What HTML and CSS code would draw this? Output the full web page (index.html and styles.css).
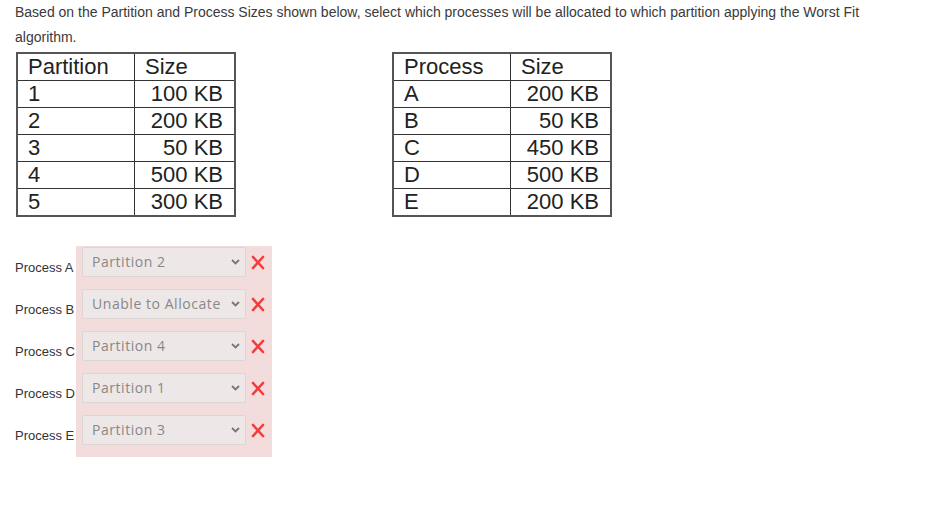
FILE: index.html
```html
<!DOCTYPE html>
<html lang="en">
  <head>
    <meta charset="UTF-8" />
    <meta name="viewport" content="width=device-width, initial-scale=1.0" />
    <title>Worst Fit Allocation</title>
    <link rel="stylesheet" href="styles.css">
  </head>
  <body>
    <p class="question">
      Based on the Partition and Process Sizes shown below, select which processes will be allocated to which partition applying the Worst Fit algorithm.
    </p>

    <div class="tables">
      <table class="size-table">
        <tr><th>Partition</th><th>Size</th></tr>
        <tr><td>1</td><td class="num">100 KB</td></tr>
        <tr><td>2</td><td class="num">200 KB</td></tr>
        <tr><td>3</td><td class="num">50 KB</td></tr>
        <tr><td>4</td><td class="num">500 KB</td></tr>
        <tr><td>5</td><td class="num">300 KB</td></tr>
      </table>

      <table class="size-table">
        <tr><th>Process</th><th>Size</th></tr>
        <tr><td>A</td><td class="num">200 KB</td></tr>
        <tr><td>B</td><td class="num">50 KB</td></tr>
        <tr><td>C</td><td class="num">450 KB</td></tr>
        <tr><td>D</td><td class="num">500 KB</td></tr>
        <tr><td>E</td><td class="num">200 KB</td></tr>
      </table>
    </div>

    <div class="answers">
      <div class="labels">
        <div class="label">Process A</div>
        <div class="label">Process B</div>
        <div class="label">Process C</div>
        <div class="label">Process D</div>
        <div class="label">Process E</div>
      </div>

      <div class="incorrect">
        <div class="answer-row">
          <div class="select"><span>Partition 2</span>
            <svg class="chevron" width="9" height="6" viewBox="0 0 9 6"><path d="M1 1l3.5 3.5L8 1" fill="none" stroke="#777" stroke-width="1.8"/></svg>
          </div>
          <svg class="mark" width="14" height="15" viewBox="0 0 14 15"><path d="M2 2l10 11M12 2L2 13" fill="none" stroke="#f53b3b" stroke-width="2.6" stroke-linecap="round"/></svg>
        </div>
        <div class="answer-row">
          <div class="select"><span>Unable to Allocate</span>
            <svg class="chevron" width="9" height="6" viewBox="0 0 9 6"><path d="M1 1l3.5 3.5L8 1" fill="none" stroke="#777" stroke-width="1.8"/></svg>
          </div>
          <svg class="mark" width="14" height="15" viewBox="0 0 14 15"><path d="M2 2l10 11M12 2L2 13" fill="none" stroke="#f53b3b" stroke-width="2.6" stroke-linecap="round"/></svg>
        </div>
        <div class="answer-row">
          <div class="select"><span>Partition 4</span>
            <svg class="chevron" width="9" height="6" viewBox="0 0 9 6"><path d="M1 1l3.5 3.5L8 1" fill="none" stroke="#777" stroke-width="1.8"/></svg>
          </div>
          <svg class="mark" width="14" height="15" viewBox="0 0 14 15"><path d="M2 2l10 11M12 2L2 13" fill="none" stroke="#f53b3b" stroke-width="2.6" stroke-linecap="round"/></svg>
        </div>
        <div class="answer-row">
          <div class="select"><span>Partition 1</span>
            <svg class="chevron" width="9" height="6" viewBox="0 0 9 6"><path d="M1 1l3.5 3.5L8 1" fill="none" stroke="#777" stroke-width="1.8"/></svg>
          </div>
          <svg class="mark" width="14" height="15" viewBox="0 0 14 15"><path d="M2 2l10 11M12 2L2 13" fill="none" stroke="#f53b3b" stroke-width="2.6" stroke-linecap="round"/></svg>
        </div>
        <div class="answer-row">
          <div class="select"><span>Partition 3</span>
            <svg class="chevron" width="9" height="6" viewBox="0 0 9 6"><path d="M1 1l3.5 3.5L8 1" fill="none" stroke="#777" stroke-width="1.8"/></svg>
          </div>
          <svg class="mark" width="14" height="15" viewBox="0 0 14 15"><path d="M2 2l10 11M12 2L2 13" fill="none" stroke="#f53b3b" stroke-width="2.6" stroke-linecap="round"/></svg>
        </div>
      </div>
    </div>
  </body>
</html>
```

FILE: styles.css
```css
body {
  font-family: "Liberation Sans", Arial, sans-serif;
  margin: 0;
  padding: 0 15px;
  color: #3a3a3a;
  background-color: #fff;
}
.question {
  font-size: 14px;
  line-height: 25px;
  margin: 0;
  max-width: 880px;
}
.tables {
  display: flex;
  align-items: flex-start;
  gap: 156px;
  margin-top: 2px;
  padding-left: 1px;
}
.size-table {
  border-collapse: collapse;
  border: 2px solid #555;
  font-size: 22px;
  color: #222;
}
.size-table th,
.size-table td {
  border: 1px solid #333;
  height: 26px;
  padding: 0 11px 0 10px;
  font-weight: normal;
  text-align: left;
  line-height: 22px;
}
.size-table th:first-child,
.size-table td:first-child {
  width: 95px;
}
.size-table th:last-child,
.size-table td:last-child {
  width: 78px;
}
.size-table .num {
  text-align: right;
}
.answers {
  display: flex;
  margin-top: 29px;
}
.labels {
  width: 61px;
  font-size: 13px;
  color: #333;
  white-space: nowrap;
}
.label {
  height: 42px;
  padding-top: 14px;
  box-sizing: border-box;
}
.incorrect {
  background-color: #f2dcdc;
  padding: 1px 7px 0 6px;
}
.answer-row {
  display: flex;
  align-items: center;
  gap: 5px;
  margin-bottom: 12px;
}
.select {
  display: flex;
  align-items: center;
  justify-content: space-between;
  box-sizing: border-box;
  width: 164px;
  height: 30px;
  padding: 0 5px 0 9px;
  background-color: #eee7e7;
  border: 1px solid #ddd4d4;
  border-radius: 2px;
  font-family: "Open Sans", sans-serif;
  font-size: 14px;
  letter-spacing: 0.55px;
  color: #888;
}
.select span {
  margin-top: -2px;
}
.mark {
  display: block;
}
```
